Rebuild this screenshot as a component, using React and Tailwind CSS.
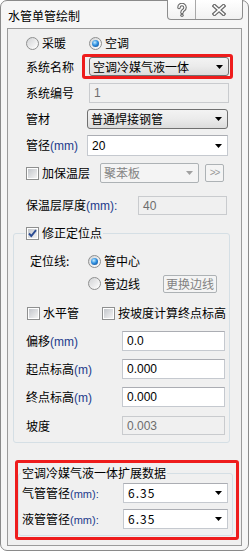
import React from 'react';

const CJK = "font-['Noto_Sans_CJK_SC',sans-serif]";
const LAT = "font-['Liberation_Sans',sans-serif]";

function Arrow({ color = '#000' }) {
  return (
    <svg width="7" height="4" viewBox="0 0 7 4" className="shrink-0">
      <path d="M0 0H7L3.5 4Z" fill={color} />
    </svg>
  );
}

function Radio({ checked }) {
  return (
    <span className="flex h-[13px] w-[13px] shrink-0 items-center justify-center rounded-full border border-[#8e8f8f] bg-linear-to-br from-[#cfd1d4] via-[#ececec] to-white">
      {checked ? (
        <span className="h-[7px] w-[7px] rounded-full bg-[radial-gradient(circle_at_40%_35%,#c4ecff_0%,#2f90e0_45%,#0b3c82_100%)]" />
      ) : (
        <span className="h-[7px] w-[7px] rounded-full bg-linear-to-br from-[#d9dadc] to-[#f7f7f7]" />
      )}
    </span>
  );
}

function Check({ checked }) {
  return (
    <span className="relative flex h-[13px] w-[13px] shrink-0 items-center justify-center border border-[#8e8f8f] bg-white">
      <span className="h-[9px] w-[9px] bg-linear-to-br from-[#c3c6cb] to-[#f4f4f4]" />
      {checked && (
        <svg width="11" height="11" viewBox="0 0 11 11" className="absolute left-[0px] top-[0px]">
          <path d="M2 5.5L4.3 8L9 2.2" fill="none" stroke="#2b4c93" strokeWidth="1.9" />
        </svg>
      )}
    </span>
  );
}

function DropList({ text, w, h }) {
  return (
    <div
      className={`flex items-center justify-between rounded-[3px] border border-[#707070] bg-linear-to-b from-[#f3f3f3] via-[#ebebeb] to-[#dcdcdc] pl-[3px] pr-[5px] ${CJK} text-[12px] leading-[14px] text-black`}
      style={{ width: w, height: h }}
    >
      <span>{text}</span>
      <Arrow />
    </div>
  );
}

function EditCombo({ text, w, h, font }) {
  return (
    <div
      className={`flex items-center justify-between border border-[#c5c9cf] border-t-[#abadb3] bg-white pl-[4px] pr-[5px] text-[12px] leading-[14px] text-black ${font}`}
      style={{ width: w, height: h }}
    >
      <span>{text}</span>
      <Arrow />
    </div>
  );
}

function Input({ text, w, h, disabled }) {
  return (
    <div
      className={`flex items-center border pl-[4px] ${LAT} text-[12px] leading-[14px] ${
        disabled
          ? 'border-[#c9cbce] bg-[#f0f0f0] text-[#6d6d6d]'
          : 'border-[#c5c9cf] border-t-[#abadb3] bg-white text-black'
      }`}
      style={{ width: w, height: h }}
    >
      {text}
    </div>
  );
}

function MM({ small, colon }) {
  return (
    <span className={`${LAT} ${small ? 'text-[11px]' : 'text-[12px]'} text-[#1c3a8c]`}>
      (mm){colon ? ':' : ''}
    </span>
  );
}

function M() {
  return <span className={`${LAT} text-[12px] text-[#1c3a8c]`}>(m)</span>;
}

export default function App() {
  return (
    <div className={`h-[554px] w-[249px] bg-white ${CJK} text-[12px] leading-[14px] text-black`}>
      <div className="flex h-[551px] w-[249px] flex-col rounded-[7px] border border-[#8a8a8a] bg-[#f6f6f6]">
        {/* title bar */}
        <div className="flex h-[27px] items-start justify-between">
          <span className="ml-[7px] mt-[8px] text-[12px] leading-[14px]">水管单管绘制</span>
          <div className="mr-[5px] -mt-px flex h-[20px] rounded-b-[4px] border border-t-0 border-[#8d8d8d] bg-linear-to-b from-white to-[#f1f1f1]">
            <div className="flex w-[28px] items-center justify-center border-r border-[#a8a8a8]">
              <svg width="10" height="14" viewBox="0 0 10 14">
                <path d="M2 4.5 A3 3 0 1 1 6.6 7 C5.2 7.8 5 8.5 5 9.6" fill="none" stroke="#6a6a6a" strokeWidth="3.6" strokeLinecap="round" />
                <path d="M2 4.5 A3 3 0 1 1 6.6 7 C5.2 7.8 5 8.5 5 9.6" fill="none" stroke="#ffffff" strokeWidth="1.4" strokeLinecap="round" />
                <circle cx="5" cy="12.3" r="1.7" fill="#6a6a6a" />
                <circle cx="5" cy="12.3" r="0.6" fill="#ffffff" />
              </svg>
            </div>
            <div className="flex w-[46px] items-center justify-center">
              <svg width="14" height="12" viewBox="0 0 14 12">
                <path d="M2.5 2 L11.5 10 M11.5 2 L2.5 10" fill="none" stroke="#6a6a6a" strokeWidth="4" strokeLinecap="square" />
                <path d="M2.5 2 L11.5 10 M11.5 2 L2.5 10" fill="none" stroke="#ffffff" strokeWidth="1.6" strokeLinecap="square" />
              </svg>
            </div>
          </div>
        </div>

        {/* client */}
        <div className="ml-[6px] flex h-[518px] w-[235px] flex-col border border-[#9b9b9b] bg-[#f0f0f0]">
          {/* row A */}
          <div className="mt-[6px] flex h-[16px] items-center pl-[18px]">
            <Radio />
            <span className="ml-[3px]">采暖</span>
            <span className="ml-[23px]">
              <Radio checked />
            </span>
            <span className="ml-[3px]">空调</span>
          </div>

          {/* row B */}
          <div className="mt-[3px] flex h-[25px] items-center pl-[18px]">
            <span className="w-[56px] shrink-0">系统名称</span>
            <div className="flex h-[25px] w-[151px] items-start rounded-[3px] border-[3px] border-[#ee1c1c] pl-[4px]">
              <DropList text="空调冷媒气液一体" w={140} h={19} />
            </div>
          </div>

          {/* row C */}
          <div className="mt-[4px] flex h-[20px] items-center pl-[18px]">
            <span className="w-[63px] shrink-0">系统编号</span>
            <Input text="1" w={140} h={20} disabled />
          </div>

          {/* row D */}
          <div className="mt-[6px] flex h-[20px] items-center pl-[18px]">
            <span className="w-[61px] shrink-0">管材</span>
            <DropList text="普通焊接钢管" w={141} h={20} />
          </div>

          {/* row E */}
          <div className="mt-[6px] flex h-[21px] items-center pl-[18px]">
            <span className="w-[61px] shrink-0">
              管径<MM />
            </span>
            <EditCombo text="20" w={141} h={21} font={LAT} />
          </div>

          {/* row F */}
          <div className="mt-[7px] flex h-[20px] items-center pl-[18px]">
            <div className="flex w-[74px] shrink-0 items-center">
              <Check />
              <span className="ml-[3px]">加保温层</span>
            </div>
            <div className="flex h-[20px] w-[99px] items-center justify-between rounded-[2px] border border-[#adb2b5] bg-[#f4f4f4] pl-[3px] pr-[5px] text-[#838383]">
              <span>聚苯板</span>
              <Arrow color="#a0a0a0" />
            </div>
            <div className={`ml-[6px] flex h-[18px] w-[19px] items-center justify-center rounded-[2px] border border-[#adb2b5] bg-[#f4f4f4] ${LAT} text-[10px] tracking-[-1px] text-[#9a9a9a]`}>
              &gt;&gt;
            </div>
          </div>

          {/* row G */}
          <div className="mt-[13px] flex h-[19px] items-center pl-[18px]">
            <span className="w-[112px] shrink-0">
              保温层厚度<MM colon />
            </span>
            <Input text="40" w={89} h={19} disabled />
          </div>

          {/* group 修正定位点 */}
          <fieldset className="ml-[5px] mt-[11px] w-[217px] rounded-[3px] border border-[#d5dfe5] pb-[7px]">
            <legend className="ml-[11px] flex h-[14px] items-center px-[1px]">
              <Check checked />
              <span className="ml-[3px]">修正定位点</span>
            </legend>

            <div className="mt-[13px] flex h-[16px] items-center pl-[16px]">
              <span className="w-[58px] shrink-0">定位线:</span>
              <Radio checked />
              <span className="ml-[3px]">管中心</span>
            </div>

            <div className="mt-[5px] flex h-[19px] items-center pl-[74px]">
              <Radio />
              <span className="ml-[3px]">管边线</span>
              <div className="ml-[23px] flex h-[18px] w-[54px] items-center justify-center rounded-[2px] border border-[#adb2b5] bg-[#f4f4f4] text-[#838383]">
                更换边线
              </div>
            </div>

            <div className="mt-[12px] flex h-[16px] items-center pl-[13px]">
              <Check />
              <span className="ml-[3px]">水平管</span>
              <span className="ml-[23px]">
                <Check />
              </span>
              <span className="ml-[3px]">按坡度计算终点标高</span>
            </div>

            <div className="mt-[10px] flex h-[20px] items-center pl-[12px]">
              <span className="w-[96px] shrink-0">
                偏移<MM />
              </span>
              <Input text="0.0" w={103} h={20} />
            </div>

            <div className="mt-[8px] flex h-[20px] items-center pl-[12px]">
              <span className="w-[96px] shrink-0">
                起点标高<M />
              </span>
              <Input text="0.000" w={103} h={20} />
            </div>

            <div className="mt-[8px] flex h-[20px] items-center pl-[12px]">
              <span className="w-[96px] shrink-0">
                终点标高<M />
              </span>
              <Input text="0.000" w={103} h={20} />
            </div>

            <div className="mt-[9px] flex h-[19px] items-center pl-[12px]">
              <span className="w-[96px] shrink-0">坡度</span>
              <Input text="0.003" w={103} h={19} disabled />
            </div>
          </fieldset>

          {/* red box 2 */}
          <div className="ml-[7px] mt-[17px] h-[80px] w-[224px] rounded-[3px] border-[3px] border-[#ee1c1c] pr-[3px] pt-[3px]">
            <fieldset className="h-[70px] rounded-[3px] border border-[#d5dfe5]">
              <legend className="ml-[2px] h-[14px] px-[1px]">空调冷媒气液一体扩展数据</legend>
              <div className="mt-[3px] flex h-[20px] items-center pl-[3px]">
                <span className="w-[101px] shrink-0">
                  气管管径<MM small colon />
                </span>
                <EditCombo text="6.35" w={105} h={20} font={`${CJK} tracking-[1px]`} />
              </div>
              <div className="mt-[6px] flex h-[20px] items-center pl-[3px]">
                <span className="w-[101px] shrink-0">
                  液管管径<MM small colon />
                </span>
                <EditCombo text="6.35" w={105} h={20} font={`${CJK} tracking-[1px]`} />
              </div>
            </fieldset>
          </div>
        </div>
      </div>
    </div>
  );
}
